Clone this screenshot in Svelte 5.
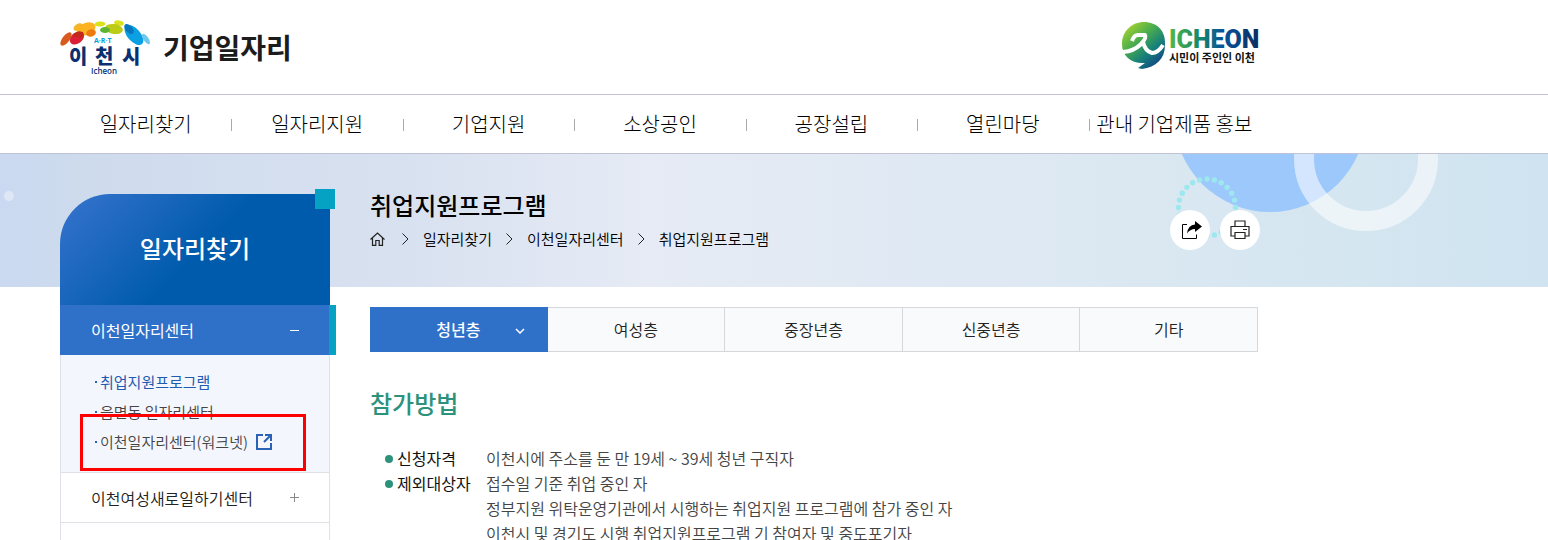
<script>
  const nav = ['일자리찾기', '일자리지원', '기업지원', '소상공인', '공장설립', '열린마당', '관내 기업제품 홍보'];
  const crumbs = ['일자리찾기', '이천일자리센터', '취업지원프로그램'];
  const tabs = ['청년층', '여성층', '중장년층', '신중년층', '기타'];
  const dots = Array.from({ length: 24 }, (_, i) => {
    const a = (i / 24) * Math.PI * 2 - Math.PI / 2;
    return { x: 47 + 28.5 * Math.cos(a), y: 53.5 + 28.5 * Math.sin(a) };
  });
</script>

<div class="page">
  <header class="wrap head">
    <a class="brand" href="#home">
      <svg class="city" width="92" height="58" viewBox="0 0 92 58" role="img" aria-label="이천시">
        <ellipse cx="6" cy="21" rx="3.5" ry="8" fill="#d85a1c" transform="rotate(38 6 21)" />
        <ellipse cx="18" cy="9" rx="3" ry="5" fill="#f5b52a" transform="rotate(58 18 9)" />
        <ellipse cx="26" cy="11" rx="10" ry="6" fill="#fbb321" transform="rotate(-22 26 11)" />
        <ellipse cx="17" cy="20" rx="8" ry="5.5" fill="#db1f34" transform="rotate(-38 17 20)" />
        <path d="M12 17q5-5 11-3q1 4-3 6z" fill="#c0291b" />
        <ellipse cx="31" cy="15" rx="5" ry="3.5" fill="#ef7a12" transform="rotate(-15 31 15)" />
        <ellipse cx="40" cy="6" rx="5.5" ry="2.5" fill="#dbe21c" transform="rotate(-5 40 6)" />
        <ellipse cx="59" cy="5" rx="5" ry="2.5" fill="#dbe21c" transform="rotate(12 59 5)" />
        <ellipse cx="54" cy="11" rx="9" ry="5" fill="#bccb16" transform="rotate(8 54 11)" />
        <ellipse cx="45" cy="12" rx="5" ry="3" fill="#5fb531" />
        <ellipse cx="74" cy="17" rx="12" ry="6.5" fill="#0aa0e3" transform="rotate(48 74 17)" />
        <ellipse cx="69" cy="11" rx="6" ry="3.5" fill="#0878be" transform="rotate(48 69 11)" />
        <ellipse cx="86" cy="21" rx="6" ry="2.5" fill="#6cc8ee" transform="rotate(55 86 21)" />
        <text class="art" x="34" y="25">A·R·T</text>
        <text class="name" x="9" y="46">이</text>
        <text class="name" x="35" y="46">천</text>
        <text class="name" x="62" y="46">시</text>
        <text class="latin" x="31" y="56">Icheon</text>
      </svg>
      <span>기업일자리</span>
    </a>
    <a class="slogan" href="#icheon" aria-label="ICHEON">
      <svg width="140" height="50" viewBox="0 0 140 50">
        <defs>
          <linearGradient id="ball" x1="0" y1="0" x2="0.8" y2="1">
            <stop offset="0" stop-color="#c5dc2a" />
            <stop offset="0.4" stop-color="#4eb04b" />
            <stop offset="0.7" stop-color="#15807a" />
            <stop offset="1" stop-color="#123f86" />
          </linearGradient>
          <linearGradient id="word" x1="0" x2="1">
            <stop offset="0" stop-color="#55b947" />
            <stop offset="0.35" stop-color="#14856d" />
            <stop offset="0.6" stop-color="#07529a" />
            <stop offset="1" stop-color="#0b2e60" />
          </linearGradient>
        </defs>
        <path d="M24 0C37 0 46 9 45 23C45 37 36 45 22 47L18 46L25 41C11 42 2 34 2 22C2 9 12 0 24 0Z" fill="url(#ball)" />
        <path d="M12 19Q14 13 18 13H25Q27 16 20 23Q14 29 3 30M23 20Q25 29 32 31Q38 31 43 23" fill="none" stroke="#fff" stroke-width="4" stroke-linejoin="round" />
        <text class="word" x="49" y="26" fill="url(#word)">ICHEON</text>
        <text class="motto" x="49" y="40">시민이 주인인 이천</text>
      </svg>
    </a>
  </header>

  <nav class="gnb" aria-label="주메뉴">
    <ul class="wrap">
      {#each nav as item}
        <li><a href="#menu">{item}</a></li>
      {/each}
    </ul>
  </nav>

  <div class="body">
    <div class="banner" aria-hidden="true">
      <i></i>
      <svg width="290" height="133" viewBox="0 0 290 133">
        <circle cx="110" cy="-38" r="96" fill="#9dc8fb" />
        <circle cx="206" cy="5" r="62" fill="none" stroke="#fff" stroke-opacity=".55" stroke-width="20" />
        {#each dots as d}
          <circle cx={d.x} cy={d.y} r="2.7" fill="#9de8ee" />
        {/each}
      </svg>
    </div>

    <div class="wrap columns">
      <aside>
        <h2>일자리찾기</h2>
        <ul class="menu">
          <li>
            <a class="item on" href="#center">이천일자리센터
              <svg width="9" height="9" viewBox="0 0 9 9"><path d="M0 4.5h9" /></svg>
            </a>
            <ul class="sub">
              <li><a class="current" href="#program">취업지원프로그램</a></li>
              <li><a href="#town">읍면동 일자리센터</a></li>
              <li>
                <a href="#worknet">이천일자리센터(워크넷)
                  <svg width="16" height="16" viewBox="0 0 16 16" fill="none" stroke="#2a62b5" stroke-width="2"><path d="M7 1H1v14h14V9M9 1h6v6M15 1L8 8" /></svg>
                </a>
              </li>
            </ul>
          </li>
          <li>
            <a class="item" href="#women">이천여성새로일하기센터
              <svg width="9" height="9" viewBox="0 0 9 9"><path d="M0 4.5h9M4.5 0v9" /></svg>
            </a>
          </li>
        </ul>
        <div class="marker"></div>
      </aside>

      <main>
        <div class="title">
          <div>
            <h1>취업지원프로그램</h1>
            <ol class="crumbs">
              <li>
                <a href="#home" aria-label="홈">
                  <svg width="15" height="14" viewBox="0 0 15 14" fill="none" stroke="#222" stroke-width="1.2"><path d="M.5 7.5L7.5 1l7 6.5M2.5 6v7.3h3.3V8.5h3.4v4.8h3.3V6" /></svg>
                </a>
              </li>
              {#each crumbs as c}
                <li>
                  <svg width="7" height="12" viewBox="0 0 7 12" fill="none" stroke="#222"><path d="M.5.5L6 6L.5 11.5" /></svg>
                  <a href="#crumb">{c}</a>
                </li>
              {/each}
            </ol>
          </div>
          <div class="tools">
            <button aria-label="공유">
              <svg width="20" height="18" viewBox="0 0 20 18"><path d="M5 3.5H.5v14h14v-4" fill="none" stroke="#000" /><path d="M13 0l7 5.5l-7 5.5V8Q8 8 5 12.5Q6 4 13 3.5Z" /></svg>
            </button>
            <button aria-label="인쇄">
              <svg width="20" height="20" viewBox="0 0 20 20" fill="none" stroke="#222" stroke-width="1.2"><path d="M5 6.5V1h10v5.5M5 16H1V6.5h18V16h-4M5 12.5h10v6H5zM13 9.5h4" /></svg>
            </button>
          </div>
        </div>

        <ul class="tabs">
          {#each tabs as t, i}
            <li>
              <a href="#tab" class:on={i === 0}>{t}
                {#if i === 0}
                  <svg width="10" height="6" viewBox="0 0 10 6" fill="none" stroke="#fff" stroke-width="1.5"><path d="M1 1l4 4l4-4" /></svg>
                {/if}
              </a>
            </li>
          {/each}
        </ul>

        <h3>참가방법</h3>
        <dl>
          <dt>신청자격</dt>
          <dd>이천시에 주소를 둔 만 19세 ~ 39세 청년 구직자</dd>
          <dt>제외대상자</dt>
          <dd>
            접수일 기준 취업 중인 자<br />
            정부지원 위탁운영기관에서 시행하는 취업지원 프로그램에 참가 중인 자<br />
            이천시 및 경기도 시행 취업지원프로그램 기 참여자 및 중도포기자
          </dd>
        </dl>
      </main>
    </div>
  </div>
</div>

<style>
  :global(body) { margin: 0; background: #fff; }
  .page {
    height: 100vh;
    display: flex;
    flex-direction: column;
    overflow: hidden;
    font: 350 16px/24px "Noto Sans CJK KR", "Noto Sans", sans-serif;
    color: #000;
  }
  ul, ol, dl, dd, h1, h2, h3 { margin: 0; padding: 0; list-style: none; }
  a { color: inherit; text-decoration: none; }
  svg { display: block; flex: none; }
  .wrap { box-sizing: border-box; max-width: 1200px; margin-left: 60px; }
  .head { width: calc(100% - 60px); height: 94px; display: flex; align-items: center; justify-content: space-between; flex: none; }
  .brand { display: flex; align-items: center; gap: 11px; font-size: 28px; line-height: 40px; font-weight: 700; color: #1c1c1c; }
  .art { font: 700 7px "Open Sans", sans-serif; fill: #0aa0e3; }
  .name { font: 900 20px "Noto Sans CJK KR", sans-serif; fill: #0b2f70; }
  .latin { font: 600 8px "Open Sans", sans-serif; fill: #0b2f70; }
  .word { font: 900 25px Roboto, sans-serif; }
  .motto { font: 700 11px "Noto Sans CJK KR", sans-serif; fill: #111; }

  .gnb { border: solid #c1c3d5; border-width: 1px 0; flex: none; }
  .gnb ul { display: grid; grid-template-columns: repeat(7, 1fr); }
  .gnb li { position: relative; text-align: center; font-size: 20px; line-height: 58px; font-weight: 300; white-space: nowrap; }
  .gnb li + li::before { content: ""; position: absolute; left: 0; top: 24px; height: 12px; border-left: 1px solid #aaa; }

  .body { position: relative; flex: 1; min-height: 0; display: flex; flex-direction: column; }
  .banner {
    position: absolute;
    inset: 0 0 auto;
    height: 133px;
    overflow: hidden;
    background: linear-gradient(90deg, #cad9f1 0, #cedbed 5%, #d8e1f0 26%, #e6ebf5 42%, #dce8f2 70%, #d4e6f0 88%, #cfe3f1 100%);
  }
  .banner i { position: absolute; left: 4px; top: 37px; width: 10px; height: 10px; border-radius: 50%; background: #dfe7f4; }
  .banner svg { position: absolute; left: 1160px; top: 0; }

  .columns { position: relative; width: calc(100% - 60px); flex: 1; display: grid; grid-template-columns: 270px minmax(0, 1fr); gap: 40px; }
  aside { position: relative; margin-top: 40px; display: flex; flex-direction: column; }
  aside::before { content: ""; position: absolute; right: -5px; top: -5px; width: 20px; height: 20px; background: #06a2c3; }
  h2 {
    height: 111px;
    border-radius: 50px 0 0 0;
    background: linear-gradient(135deg, #2f70c9 8%, #005bac 52%);
    color: #fff;
    font-size: 24px;
    line-height: 108px;
    font-weight: 500;
    text-align: center;
  }
  .menu { flex: 1; border: solid #dfe1e6; border-width: 0 1px; }
  .item { display: flex; align-items: center; justify-content: space-between; height: 49px; padding: 0 30px; border-bottom: 1px solid #dfe1e6; color: #222; }
  .item svg { stroke: #888; }
  .item.on { height: 50px; margin: 0 -7px 0 -1px; padding: 0 30px 0 31px; border: 0; border-right: 7px solid #06a2c3; background: #2f70c9; color: #fff; font-weight: 400; }
  .item.on svg { stroke: #fff; }
  .sub { padding: 12px 0 15px 34px; background: #f3f6fc; border-bottom: 1px solid #dfe1e6; font-size: 15px; }
  .sub a { display: flex; align-items: center; line-height: 30px; color: #444; }
  .sub a::before { content: ""; width: 2px; height: 2px; margin-right: 3px; background: #2a62b5; }
  .sub svg { margin-left: 8px; }
  .sub .current { color: #1f5bb0; font-weight: 400; }
  .marker { position: absolute; left: 20px; top: 220px; width: 220px; height: 51px; border: 3px solid #f00; }

  .title { height: 133px; box-sizing: border-box; padding-top: 33px; display: flex; justify-content: space-between; }
  h1 { font-size: 24px; line-height: 36px; font-weight: 500; }
  .crumbs { display: flex; gap: 14px; margin-top: 4px; font-size: 15px; }
  .crumbs li { display: flex; align-items: center; gap: 14px; }
  .crumbs li:first-child { margin-right: 3px; }
  .tools { display: flex; gap: 10px; padding-top: 23px; }
  .tools button { width: 40px; height: 40px; padding: 0; border: 0; border-radius: 50%; background: #fff; display: grid; place-items: center; }
  .tools button:first-child { padding-left: 3px; }
  .tabs { display: grid; grid-template-columns: repeat(5, 1fr); margin: 20px 2px 0 0; }
  .tabs a { position: relative; display: block; border: solid #d5d7dc; border-width: 1px 1px 1px 0; background: #f9fafc; text-align: center; line-height: 43px; color: #222; }
  .tabs .on { background: #2f70c9; border-color: #2f70c9; color: #fff; font-weight: 500; }
  .tabs svg { position: absolute; right: 22px; top: 20px; }
  h3 { margin-top: 33px; font-size: 24px; line-height: 36px; font-weight: 500; color: #2d927c; }
  dl { display: grid; grid-template-columns: 101px 1fr; margin: 25px 0 0 15px; line-height: 25px; }
  dt { display: flex; align-items: center; height: 25px; font-weight: 400; color: #111; white-space: nowrap; }
  dt::before { content: ""; width: 8px; height: 8px; margin-right: 4px; border-radius: 50%; background: #2d927c; }
  dd { color: #444; }
</style>
